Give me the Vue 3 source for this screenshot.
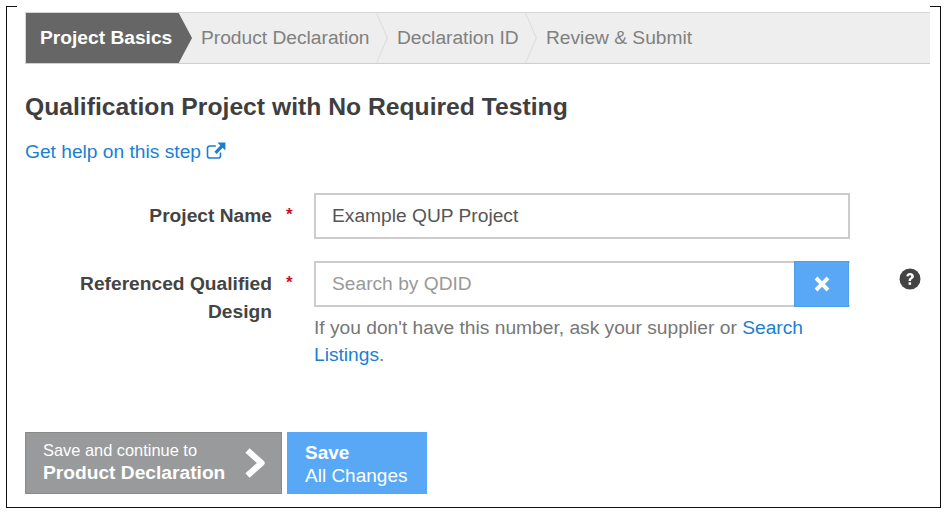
<script setup>
const steps = [
  { label: 'Project Basics', active: true },
  { label: 'Product Declaration' },
  { label: 'Declaration ID' },
  { label: 'Review & Submit' }
]
</script>

<template>
  <div class="frame">
    <nav class="steps">
      <div v-for="s in steps" :key="s.label" class="step" :class="{ active: s.active }">
        <span>{{ s.label }}</span>
      </div>
    </nav>

    <h1 class="title">Qualification Project with No Required Testing</h1>

    <a class="help">Get help on this step
      <svg class="ext" viewBox="0 0 20 18" width="20" height="18" aria-hidden="true">
        <path d="M14.5 10.5v3.2a2.3 2.3 0 0 1-2.3 2.3H3.8a2.3 2.3 0 0 1-2.3-2.3V6.3A2.3 2.3 0 0 1 3.8 4h6" fill="none" stroke="#1b7fd1" stroke-width="1.6"/>
        <path d="M11.4 0.6h8V8.6l-2.8-2.8-6 6.2-2.2-2.2 6-6.2z" fill="#1b7fd1"/>
      </svg>
    </a>

    <div class="row first">
      <div class="label">Project Name</div>
      <div class="req">*</div>
      <div class="field">
        <div class="input"><span class="value">Example QUP Project</span></div>
      </div>
    </div>

    <div class="row second">
      <div class="label">Referenced Qualified Design</div>
      <div class="req">*</div>
      <div class="field">
        <div class="input joined">
          <span class="placeholder">Search by QDID</span>
          <div class="clear">
            <svg viewBox="0 0 18 18" width="18" height="18" aria-hidden="true">
              <path d="M4.4 1.6 9 6.2l4.6-4.6 2.8 2.8L11.8 9l4.6 4.6-2.8 2.8L9 11.8l-4.6 4.6-2.8-2.8L6.2 9 1.6 4.4z" fill="#fff"/>
            </svg>
          </div>
        </div>
        <p class="hint">If you don't have this number, ask your supplier or <a>Search Listings</a>.</p>
      </div>
      <svg class="q" viewBox="0 0 22 22" width="22" height="22" aria-hidden="true">
        <circle cx="11" cy="11" r="10.5" fill="#444"/>
        <path d="M7.3 8.2C7.6 6.2 9 5 11.1 5c2.2 0 3.8 1.3 3.8 3.2 0 1.5-.8 2.2-1.8 2.9-.8.5-1.1.9-1.1 1.8H9.6c0-1.7.5-2.4 1.6-3.1.7-.5 1-.8 1-1.4 0-.7-.5-1.2-1.2-1.2-.8 0-1.3.5-1.5 1.3z" fill="#fff"/>
        <rect x="9.6" y="14.3" width="2.5" height="2.5" fill="#fff"/>
      </svg>
    </div>

    <div class="actions">
      <button class="btn continue">
        <span class="btn-text">
          <span class="small">Save and continue to</span>
          <strong>Product Declaration</strong>
        </span>
        <svg viewBox="0 0 22 32" width="22" height="32" aria-hidden="true">
          <path d="M3.5 3.5 17.5 16 3.5 28.5" fill="none" stroke="#fff" stroke-width="6.2" stroke-linejoin="round"/>
        </svg>
      </button>
      <button class="btn save">
        <strong>Save</strong>
        <span>All Changes</span>
      </button>
    </div>
  </div>
</template>

<style>
html, body { margin: 0; background: #fff; }
</style>

<style scoped>
.frame {
  position: relative;
  box-sizing: border-box;
  width: 935px;
  height: 502px;
  margin: 6px 0 0 6px;
  padding: 6px 10px 0 18px;
  border: 1px solid #111;
  border-top: 0;
  font-family: "Liberation Sans", Arial, sans-serif;
  color: #444;
}
.frame::before, .frame::after {
  content: "";
  position: absolute;
  top: 0;
  width: 10px;
  height: 1px;
  background: #111;
}
.frame::before { left: 0; }
.frame::after { right: 0; }

.steps {
  display: flex;
  box-sizing: border-box;
  width: 905px;
  height: 52px;
  background: #eee;
  border-top: 1px solid #d6d6d6;
  border-bottom: 1px solid #cfcfcf;
  border-left: 1px solid #d6d6d6;
}
.step {
  position: relative;
  display: flex;
  align-items: center;
  box-sizing: border-box;
  flex: none;
  font-size: 19.2px;
  white-space: nowrap;
  color: #808080;
}
.step:not(.active):not(:last-child)::after {
  content: "";
  position: absolute;
  right: 2px;
  top: 0;
  width: 12px;
  height: 100%;
  background: #dedede;
  clip-path: polygon(0 0, 1px 0, 100% 50%, 1px 100%, 0 100%, calc(100% - 1.4px) 50%);
}
.step.active {
  width: 166px;
  padding-left: 14px;
  background: #666;
  color: #fff;
  font-weight: 700;
  clip-path: polygon(0 0, 92% 0, 100% 50%, 92% 100%, 0 100%);
}
.step:nth-child(2) { width: 198px; padding-left: 9px; }
.step:nth-child(3) { width: 149px; padding-left: 7px; }
.step:nth-child(4) { padding-left: 7px; }

.title {
  margin: 29px 0 0;
  font-size: 24.7px;
  line-height: 28px;
  font-weight: 700;
  color: #3f3f3f;
}
.help {
  display: flex;
  align-items: center;
  gap: 5px;
  margin-top: 19px;
  height: 24px;
  font-size: 19.2px;
  color: #1b7fd1;
}
.ext { margin-top: -3px; }

.row {
  display: flex;
  align-items: flex-start;
}
.first { margin-top: 29px; }
.second { margin-top: 22px; }
.label {
  box-sizing: border-box;
  width: 247px;
  padding-top: 9px;
  text-align: right;
  font-size: 19.2px;
  line-height: 28px;
  font-weight: 700;
  color: #444;
}
.req {
  width: 42px;
  box-sizing: border-box;
  padding: 12px 0 0 14px;
  font-size: 17px;
  line-height: 20px;
  font-weight: 700;
  color: #c8102e;
}
.field { width: 536px; }
.input {
  display: flex;
  align-items: center;
  box-sizing: border-box;
  height: 46px;
  border: 2px solid #ccc;
  padding-left: 16px;
  font-size: 19.2px;
  background: #fff;
}
.input.joined {
  justify-content: space-between;
  padding-right: 0;
  border-right: 0;
}
.value { color: #555; }
.placeholder { color: #999; }
.clear {
  display: flex;
  align-items: center;
  justify-content: center;
  box-sizing: border-box;
  width: 55px;
  height: 46px;
  margin: -2px 1px -2px 0;
  background: #58a8f5;
  border: 1px solid #4f9ee8;
}
.hint {
  margin: 7px 0 0;
  font-size: 19.2px;
  line-height: 27px;
  color: #777;
}
.hint a { color: #1b7fd1; }
.q { margin: 7px 0 0 49px; flex: none; }

.actions {
  display: flex;
  gap: 5px;
  margin-top: 64px;
}
.btn {
  box-sizing: border-box;
  height: 62px;
  border: 1px solid #8a8a8a;
  border-radius: 0;
  font-family: inherit;
  color: #fff;
  text-align: left;
  padding: 0;
}
.continue {
  display: flex;
  align-items: center;
  width: 257px;
  padding-left: 17px;
  background: #999a9b;
}
.btn-text { display: flex; flex-direction: column; width: 201px; margin-top: -2px; }
.small { font-size: 16.4px; line-height: 21px; }
.continue strong { font-size: 19.2px; line-height: 23px; }
.save {
  display: flex;
  flex-direction: column;
  justify-content: center;
  width: 140px;
  padding: 2px 0 0 17px;
  background: #58a8f5;
  border-color: #58a8f5;
  font-size: 19px;
  line-height: 23px;
}
</style>
